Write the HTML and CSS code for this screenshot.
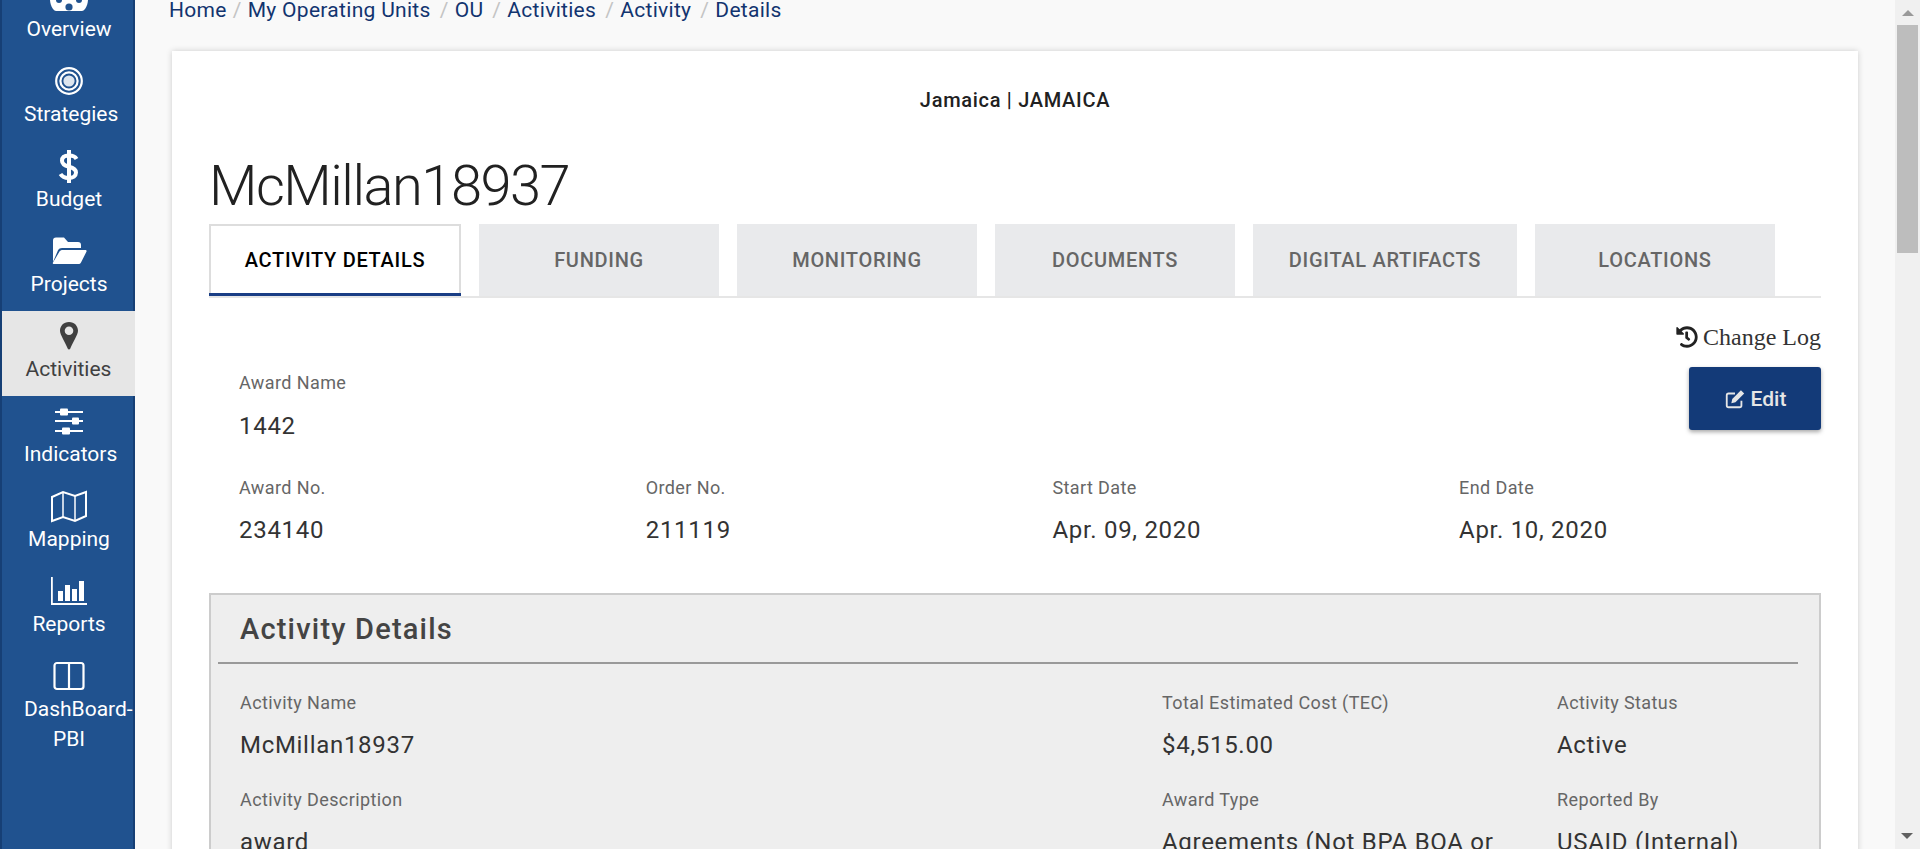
FILE: index.html
```html
<!DOCTYPE html>
<html lang="en">
<head>
	<meta charset="utf-8">
	<title>Activity Details</title>
	<link rel="stylesheet" href="styles.css">
</head>
<body>
	<div class="page">
		<nav class="sidebar">
			<a class="nav-item" href="#">
				<svg class="nav-icon" viewBox="0 0 40 40"><path fill="#fff" d="M20 3C9 3 1 12 1 23c0 4 1 7 3 10 1 1 2 2 3 2h26c1 0 2-1 3-2 2-3 3-6 3-10C39 12 31 3 20 3z"/><circle cx="20" cy="31" r="3.6" fill="#20528f"/><circle cx="10" cy="24" r="3" fill="#20528f"/><circle cx="30" cy="24" r="3" fill="#20528f"/></svg>
				<span>Overview</span>
			</a>
			<a class="nav-item" href="#">
				<svg class="nav-icon" viewBox="0 0 40 40" fill="none" stroke="#fff"><circle cx="20" cy="20" r="12.8" stroke-width="2.2"/><circle cx="20" cy="20" r="8.6" stroke-width="2.2"/><circle cx="20" cy="20" r="5.6" fill="#fff" fill-opacity=".85" stroke="none"/></svg>
				<span>Strategies</span>
			</a>
			<a class="nav-item" href="#">
				<svg class="nav-icon" viewBox="0 0 40 40" fill="none" stroke="#fff" stroke-width="4"><path d="M27.5 13c-1-2-3.5-3.500-7.500-3.500-4.500 0-7 2-7 5.300 0 3.700 3 5 7 6 4 1 7 2.300 7 5.700 0 3.500-3 5.500-7.500 5.500-3.500 0-6.500-1.500-8-4"/><path d="M20 4v33"/></svg>
				<span>Budget</span>
			</a>
			<a class="nav-item" href="#">
				<svg class="nav-icon" viewBox="0 0 40 40"><path fill="#fff" d="M4 31V9.500C4 7.500 5 6.500 7 6.500h8l4 4.500h10c2 0 3 1 3 3v3H13c-2 0-3 .7-4 2.300z"/><path fill="#fff" d="M13.500 19H36c1.500 0 2 .8 1.300 2L32 31.500c-.6 1-1.500 1.500-2.700 1.500H5c-1.200 0-1.500-.7-1-1.500l6.500-11c.8-1 1.800-1.500 3-1.500z"/></svg>
				<span>Projects</span>
			</a>
			<a class="nav-item active" href="#">
				<svg class="nav-icon" viewBox="0 0 40 40"><path fill="#404040" fill-rule="evenodd" d="M20 6c-5.500 0-9 4-9 8.800 0 4 5.500 12 7.800 18 .4 1 2 1 2.400 0 2.300-6 7.800-14 7.800-18C29 10 25.500 6 20 6zm0 4.500a4.300 4.300 0 1 1 0 8.600 4.300 4.300 0 0 1 0-8.600z"/></svg>
				<span>Activities</span>
			</a>
			<a class="nav-item" href="#">
				<svg class="nav-icon" viewBox="0 0 40 40"><g fill="#fff"><rect x="6" y="10" width="28" height="2"/><rect x="6" y="19" width="28" height="2"/><rect x="6" y="29" width="28" height="2"/><rect x="11" y="7.500" width="8" height="7" rx="1"/><rect x="23" y="16.500" width="7" height="7" rx="1"/><rect x="13" y="26.500" width="8" height="7" rx="1"/></g></svg>
				<span>Indicators</span>
			</a>
			<a class="nav-item" href="#">
				<svg class="nav-icon" viewBox="0 0 40 40" fill="none" stroke="#fff" stroke-width="2"><path d="M3 11 14 6 26 10 37 6V30L26 35 14 31 3 35z"/><path d="M14 6V31" stroke-width="1.500"/><path d="M26 10V35" stroke-width="1.500"/></svg>
				<span>Mapping</span>
			</a>
			<a class="nav-item" href="#">
				<svg class="nav-icon" viewBox="0 0 40 40" fill="#fff"><path d="M2 6h1.800v26H38v2H2z"/><rect x="9" y="20" width="5" height="10"/><rect x="16" y="14" width="5" height="16"/><rect x="23" y="18" width="5" height="12"/><rect x="30" y="10" width="5" height="20"/></svg>
				<span>Reports</span>
			</a>
			<a class="nav-item" href="#">
				<svg class="nav-icon" viewBox="0 0 40 40" fill="none" stroke="#fff" stroke-width="2.200"><rect x="5.500" y="7" width="29" height="26" rx="2.500"/><path d="M20 7V33"/></svg>
				<span>DashBoard-PBI</span>
			</a>
		</nav>

		<main class="main">
			<ul class="breadcrumb">
				<li>Home</li>
				<li>My Operating Units</li>
				<li>OU</li>
				<li>Activities</li>
				<li>Activity</li>
				<li>Details</li>
			</ul>

			<section class="card">
				<p class="country">Jamaica | JAMAICA</p>
				<h1 class="title">McMillan18937</h1>

				<div class="tabs">
					<a class="tab active" href="#">Activity Details</a>
					<a class="tab" href="#">Funding</a>
					<a class="tab" href="#">Monitoring</a>
					<a class="tab" href="#">Documents</a>
					<a class="tab" href="#">Digital Artifacts</a>
					<a class="tab" href="#">Locations</a>
				</div>

				<div class="summary">
					<div class="summary-actions">
						<a class="change-log" href="#">
							<svg class="log-icon" viewBox="0 0 512 512"><path fill="#222" d="M504 255.500C504 392 393 504 256 504c-58 0-111-20-153-53-12-9-13-27-2-38l11-11c9-9 23-10 32-2 31 24 70 39 112 39 101 0 183-82 183-183S357 73 256 73c-48 0-92 19-125 50l51 51c10 10 3 27-11 27H24c-9 0-16-7-16-16V38c0-14 17-21 27-11l50 50C130 34 190 8 256 8c137 0 248 110 248 247.500zM315 334l10-13c8-10 6-25-4-33l-41-32V152c0-13-11-24-24-24h-16c-13 0-24 11-24 24v133l66 51c11 8 25 6 33-2z"/></svg>
							Change Log
						</a>
						<a class="btn-edit" href="#">
							<svg class="edit-icon" viewBox="0 0 24 24" fill="none" stroke="#e6e6e6" stroke-width="2"><path d="M19 14v5a2 2 0 0 1-2 2H5a2 2 0 0 1-2-2V8a2 2 0 0 1 2-2h7"/><path fill="#e6e6e6" stroke="none" d="M18.500 2.500l3.500 3.500L12.500 15.500 8 16.500l1-4.500z"/></svg>
							Edit
						</a>
					</div>
					<div class="field award-name">
						<div class="field-label">Award Name</div>
						<div class="field-value">1442</div>
					</div>
					<div class="summary-row">
						<div class="field">
							<div class="field-label">Award No.</div>
							<div class="field-value">234140</div>
						</div>
						<div class="field">
							<div class="field-label">Order No.</div>
							<div class="field-value">211119</div>
						</div>
						<div class="field">
							<div class="field-label">Start Date</div>
							<div class="field-value">Apr. 09, 2020</div>
						</div>
						<div class="field">
							<div class="field-label">End Date</div>
							<div class="field-value">Apr. 10, 2020</div>
						</div>
					</div>
				</div>

				<div class="panel">
					<h2 class="panel-title">Activity Details</h2>
					<div class="panel-grid">
						<div class="field">
							<div class="field-label">Activity Name</div>
							<div class="field-value">McMillan18937</div>
						</div>
						<div class="field">
							<div class="field-label">Total Estimated Cost (TEC)</div>
							<div class="field-value">$4,515.00</div>
						</div>
						<div class="field">
							<div class="field-label">Activity Status</div>
							<div class="field-value">Active</div>
						</div>
						<div class="field">
							<div class="field-label">Activity Description</div>
							<div class="field-value">award</div>
						</div>
						<div class="field">
							<div class="field-label">Award Type</div>
							<div class="field-value">Agreements (Not BPA BOA or IDIQ)</div>
						</div>
						<div class="field">
							<div class="field-label">Reported By</div>
							<div class="field-value">USAID (Internal)</div>
						</div>
					</div>
				</div>
			</section>
		</main>

		<div class="scrollbar">
			<div class="scroll-up"></div>
			<div class="scroll-thumb"></div>
			<div class="scroll-down"></div>
		</div>
	</div>
</body>
</html>
```

FILE: styles.css
```css
html, body{
	margin: 0;
	height: 100%;
	overflow: hidden;
}

body{
	font-family: Roboto, "Liberation Sans", sans-serif;
	background: #f9f9f9;
}

a{
	text-decoration: none;
	color: inherit;
}

.page{
	display: flex;
	height: 849px;
	overflow: hidden;
}

/*menu lateral*/
.sidebar{
	flex: 0 0 131px;
	background: #20528f;
	border-left: 2px solid #163f75;
	border-right: 2px solid #163f75;
	margin-top: -29px;
	height: 878px;
}

.nav-item{
	display: flex;
	flex-direction: column;
	align-items: center;
	height: 85px;
	padding: 5px 0 0 3px;
	box-sizing: border-box;
	color: #fff;
	font-size: 21px;
	line-height: 30px;
}

/*textos maiores que 90px passam da caixa para a direita*/
.nav-item span{
	display: block;
	width: 90px;
	text-align: center;
}

.nav-item.active{
	background: #e6e6e6;
	color: #404040;
	margin-right: -2px;
	padding-left: 0;
	position: relative;
}

.nav-icon{
	width: 40px;
	height: 40px;
	flex: none;
	margin-bottom: -2px;
}

/*area principal*/
.main{
	flex: 1;
	min-width: 0;
	padding: 0 37px;
	margin-top: -4px;
}

.breadcrumb{
	display: flex;
	list-style: none;
	margin: 0 0 0 -3px;
	padding: 0;
	height: 55px;
	font-size: 21px;
	letter-spacing: .3px;
	line-height: 28px;
	color: #12346f;
}

.breadcrumb li + li::before{
	content: "/";
	color: #c4c4c4;
	padding: 0 6px;
}

.breadcrumb li + li + li::before{
	padding-left: 9px;
}

.card{
	background: #fff;
	width: 1686px;
	box-sizing: border-box;
	padding: 34px 37px 40px;
	box-shadow: 0 0 6px rgba(0,0,0,.18);
	height: 1200px;
}

.country{
	margin: 0;
	text-align: center;
	font-size: 20px;
	font-weight: 500;
	line-height: 30px;
	letter-spacing: .7px;
	color: #212121;
}

.title{
	margin: 34px 0 0;
	font-size: 56px;
	font-weight: 300;
	line-height: 75px;
	letter-spacing: -1.5px;
	color: #212121;
}

/*abas*/
.tabs{
	display: flex;
	gap: 18px;
	height: 72px;
	border-bottom: 2px solid #e6e6e6;
}

.tab{
	width: 240px;
	padding: 0 10px;
	box-sizing: border-box;
	flex: none;
	display: flex;
	align-items: center;
	justify-content: center;
	background: #e9eaec;
	color: #666;
	font-size: 20px;
	font-weight: 500;
	letter-spacing: .7px;
	text-transform: uppercase;
	white-space: nowrap;
}

.tab:nth-child(5){
	width: 264px;
}

.tab.active{
	width: 252px;
	background: #fff;
	color: #000;
	border: 2px solid #ddd;
	border-bottom: 0;
	box-shadow: 0 3px 0 #1a3e85;
	height: 69px;
}

/*resumo*/
.summary{
	position: relative;
	padding: 73px 30px 0;
	height: 295px;
	box-sizing: border-box;
}

.summary-actions{
	position: absolute;
	top: 25px;
	right: 0;
	display: flex;
	flex-direction: column;
	align-items: flex-end;
	gap: 16px;
}

.change-log{
	display: flex;
	align-items: center;
	gap: 5px;
	font-family: "Liberation Serif", serif;
	font-size: 24px;
	line-height: 28px;
	color: #333;
}

.log-icon{
	width: 22px;
	height: 22px;
}

.btn-edit{
	display: flex;
	align-items: center;
	justify-content: center;
	gap: 5px;
	width: 132px;
	height: 63px;
	background: #133a78;
	color: #e6e6e6;
	border-radius: 3px;
	font-size: 21px;
	font-weight: 500;
	box-shadow: 0 2px 4px rgba(0,0,0,.35);
}

.edit-icon{
	width: 22px;
	height: 22px;
}

.field-label{
	font-size: 18px;
	line-height: 24px;
	letter-spacing: .4px;
	color: #666;
}

.field-value{
	font-size: 24px;
	line-height: 30px;
	letter-spacing: .7px;
	color: #333;
	margin-top: 16px;
}

.award-name{
	margin-bottom: 35px;
}

.summary-row{
	display: grid;
	grid-template-columns: repeat(4, 406.7px);
}

.summary-row .field-value, .panel-grid .field-value{
	margin-top: 15px;
}

/*painel*/
.panel{
	background: #eee;
	border: 2px solid #ccc;
	padding: 0 21px 30px 7px;
	height: 600px;
	box-sizing: border-box;
}

.panel-title{
	margin: 0;
	padding: 0 0 0 22px;
	height: 67px;
	line-height: 69px;
	font-size: 29px;
	font-weight: 500;
	letter-spacing: 1.2px;
	color: #444;
	border-bottom: 2px solid #999;
}

.panel-grid{
	display: grid;
	grid-template-columns: 922px 395px 1fr;
	row-gap: 28px;
	padding: 27px 0 0 22px;
}

/*barra de rolagem*/
.scrollbar{
	background: #f0f0f0;
	position: absolute;
	top: 0;
	right: 0;
	width: 25px;
	height: 849px;
}

.scroll-up{
	width: 0;
	height: 0;
	margin: 10px auto 0;
	border-left: 6px solid transparent;
	border-right: 6px solid transparent;
	border-bottom: 6px solid #999;
}

.scroll-thumb{
	width: 21px;
	height: 228px;
	margin: 9px 0 0 2px;
	background: #bdbdbd;
}

.scroll-down{
	position: absolute;
	bottom: 10px;
	left: 6px;
	border-left: 6px solid transparent;
	border-right: 6px solid transparent;
	border-top: 6px solid #606060;
}
```
